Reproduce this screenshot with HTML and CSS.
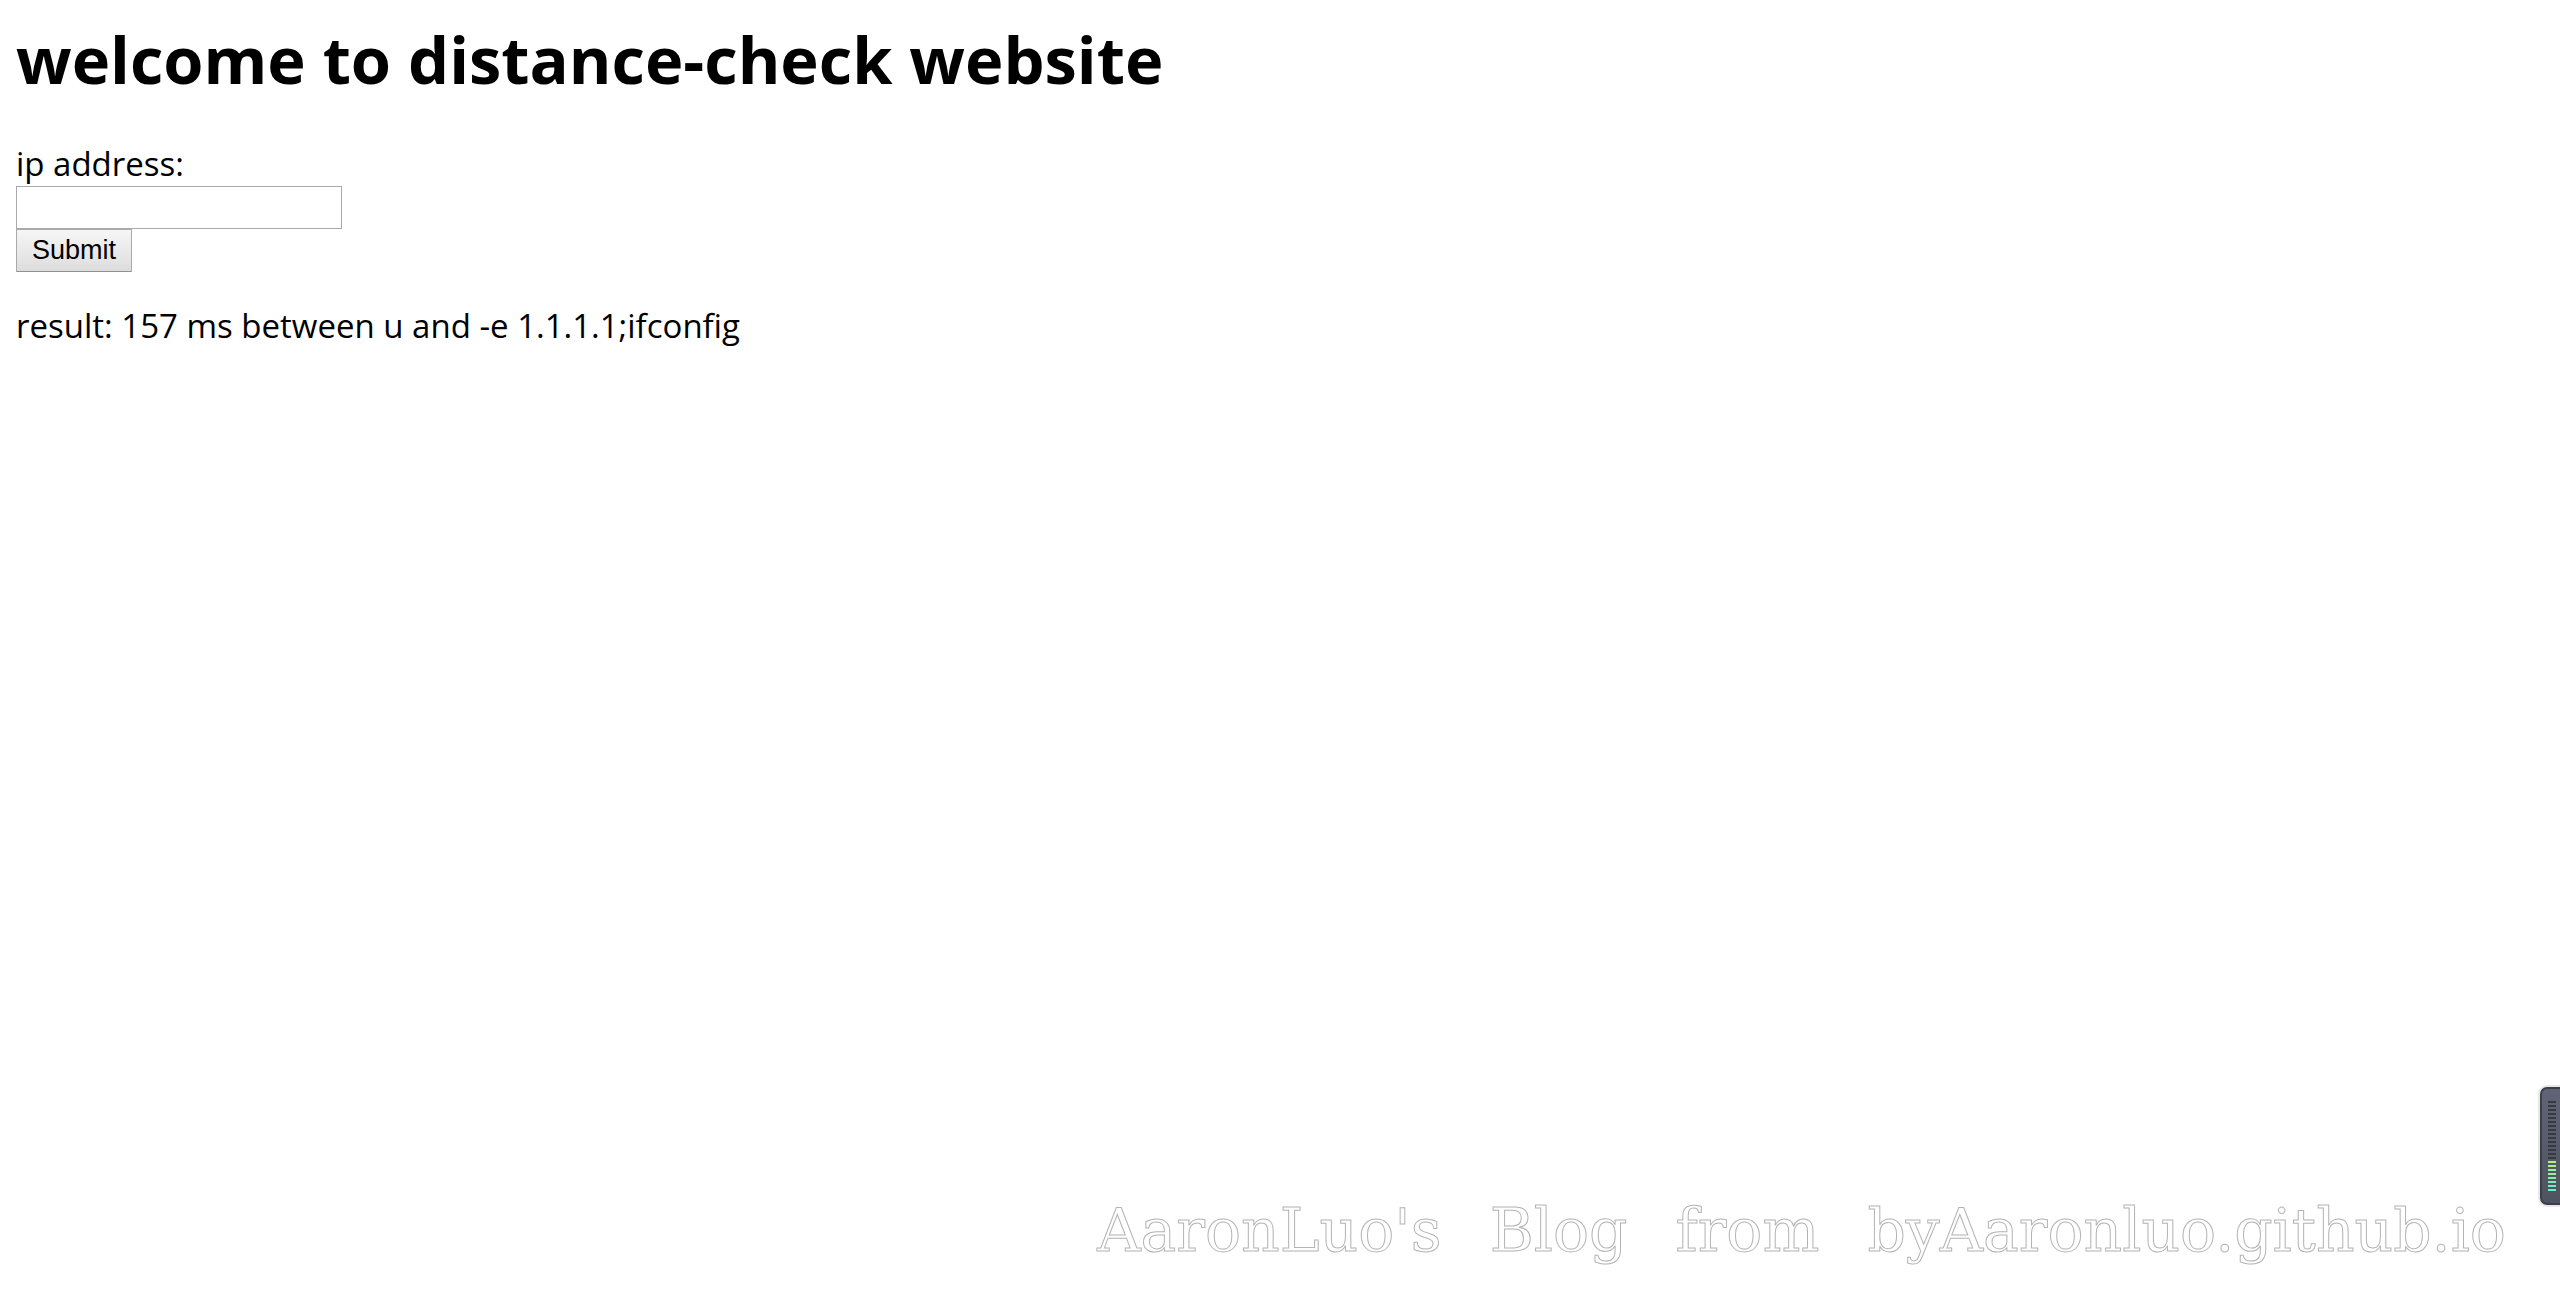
FILE: index.html
```html
<!DOCTYPE html>
<html lang="en">
<head>
<meta charset="utf-8">
<title>distance-check</title>
<link rel="stylesheet" href="styles.css">
</head>
<body>
<main class="page">
  <h1 class="title">welcome to distance-check website</h1>
  <form class="check-form">
    <label for="ip">ip address:</label>
    <input class="field" id="ip" name="ip" type="text">
    <button class="submit" type="submit">Submit</button>
  </form>
  <p class="result">result: 157 ms between u and -e 1.1.1.1;ifconfig</p>
</main>
<aside class="meter" aria-hidden="true">
  <div class="bars-off"></div>
  <div class="bars-on"></div>
</aside>
<footer class="watermark"><span>AaronLuo's</span> <span>Blog</span> <span>from</span> <span>byAaronluo.github.io</span></footer>
</body>
</html>
```

FILE: styles.css
```css
* {
  box-sizing: border-box;
}

body {
  margin: 0;
  background: #fff;
  color: #000;
  font-family: "Open Sans", "Noto Sans", sans-serif;
  font-size: 33px;
  line-height: 44px;
}

.page {
  padding: 16px;
}

.title {
  margin: 0 0 40px;
  font-size: 65px;
  line-height: 86px;
  font-weight: 700;
}

.check-form {
  display: flex;
  flex-direction: column;
  align-items: flex-start;
}

.field,
.submit {
  height: 43px;
  border: 1px solid #a9a9a9;
  font: 27px "Liberation Sans", Arial, sans-serif;
}

.field {
  width: 326px;
  padding: 2px 4px;
  background: #fff;
}

.submit {
  padding: 0 15px;
  border-bottom-color: #909090;
  border-radius: 1px;
  background: linear-gradient(#f6f6f6, #ddd);
  color: #000;
}

.result {
  margin: 32px 0 0;
}

.meter {
  position: fixed;
  right: 0;
  bottom: 105px;
  width: 20px;
  height: 118px;
  padding: 12px 4px 0 6px;
  border: 2px solid #3c3f49;
  border-right: 0;
  border-radius: 7px 0 0 7px;
  background: linear-gradient(#5f6575, #4f535f);
  box-shadow: 0 0 0 2px #e8e8e9;
}

/* Level bars: 2px on, 2px off */
.bars-off,
.bars-on {
  width: 8px;
  -webkit-mask: repeating-linear-gradient(#000 0 2px, transparent 2px 4px);
  mask: repeating-linear-gradient(#000 0 2px, transparent 2px 4px);
}

.bars-off {
  height: 60px;
  background: #363942;
}

.bars-on {
  height: 32px;
  background: linear-gradient(#b4f080, #86efa5 50%, #5eeadb);
}

.watermark {
  position: fixed;
  right: 54px;
  bottom: 44px;
  display: flex;
  gap: 48px;
  color: transparent;
  font-family: "DejaVu Serif", serif;
  font-size: 60px;
  line-height: 72px;
  -webkit-text-stroke: 1px #b4b4b4;
}
```
